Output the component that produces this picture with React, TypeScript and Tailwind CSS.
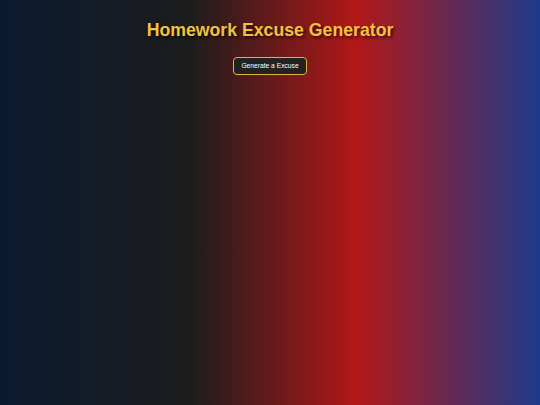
import React, { useState } from 'react';

const excuses = [
  'My dog ate it.',
  'The Wi-Fi went down right as I hit save.',
  'A time traveler borrowed it for research.',
  'My little brother used it as a paper airplane.',
];

export default function App() {
  const [excuse, setExcuse] = useState<string | null>(null);

  const generate = () => {
    setExcuse(excuses[Math.floor(Math.random() * excuses.length)]);
  };

  return (
    <div className="min-h-[405px] w-full bg-[linear-gradient(to_right,#0a1a2f_0%,#1c1c1c_35%,#b21818_66%,#1e3a8a_100%)] font-['Liberation_Sans',Arial,sans-serif] flex flex-col items-center pt-[19px]">
      <h1 className="text-[17.7px] leading-[22px] font-bold text-[#f2c23e] [text-shadow:2px_2px_3px_rgba(0,0,0,0.6)]">
        Homework Excuse Generator
      </h1>
      <button
        onClick={generate}
        className="mt-[16px] h-[18px] px-[7px] rounded-[4px] border border-[#e0b43a] bg-[#222222] text-white text-[6.7px] leading-none"
      >
        Generate a Excuse
      </button>
      {excuse && <p className="mt-3 text-sm text-white">{excuse}</p>}
    </div>
  );
}
